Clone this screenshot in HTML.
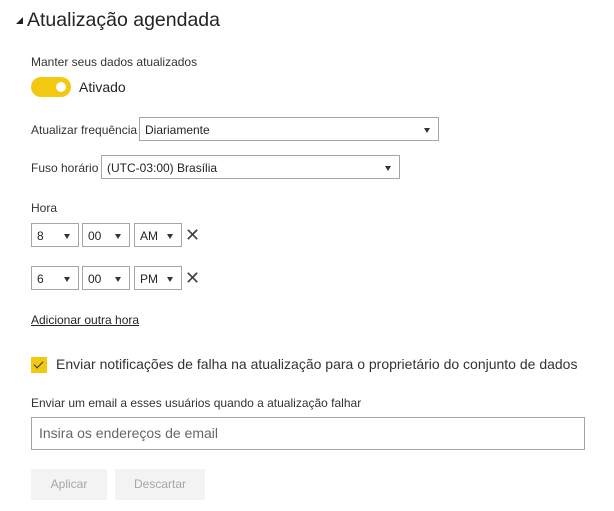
<!DOCTYPE html>
<html><head><meta charset="utf-8"><style>
*{margin:0;padding:0;box-sizing:border-box}
body{width:614px;height:511px;background:#fff;font-family:"Liberation Sans",sans-serif;color:#252423;position:relative;overflow:hidden}
.a{position:absolute;white-space:nowrap}
.sel{position:absolute;border:1px solid #a6a6a6;background:#fff;font-size:12px;padding-left:5px;line-height:22px;padding-top:1px;color:#252423}
.sel:after{content:"";position:absolute;right:8px;top:10px;border-left:3px solid transparent;border-right:3px solid transparent;border-top:5px solid #333}
.x{position:absolute;font-size:18px;line-height:18px;color:#444}
.btn{position:absolute;background:#f3f3f3;color:#a6a6a6;font-size:12px;text-align:center;line-height:31px}
</style></head><body>
<div class="a" style="left:16px;top:17px;width:0;height:0;border-left:7px solid transparent;border-bottom:7px solid #222"></div>
<div class="a" style="left:27px;top:9px;font-size:19.5px;color:#252423">Atualização agendada</div>
<div class="a" style="left:31px;top:55px;font-size:12px;color:#333">Manter seus dados atualizados</div>
<div class="a" style="left:31px;top:77px;width:40px;height:20px;border-radius:10px;background:#f2c811"></div>
<div class="a" style="left:56px;top:82px;width:10px;height:10px;border-radius:50%;background:#fff"></div>
<div class="a" style="left:79px;top:79px;font-size:14px">Ativado</div>
<div class="a" style="left:31px;top:123px;font-size:12px;color:#333">Atualizar frequência</div>
<div class="sel" style="left:139px;top:117px;width:300px;height:24px">Diariamente</div>
<div class="a" style="left:31px;top:161px;font-size:12px;color:#333">Fuso horário</div>
<div class="sel" style="left:101px;top:155px;width:299px;height:24px">(UTC-03:00) Brasília</div>
<div class="a" style="left:31px;top:201px;font-size:12px;color:#333">Hora</div>
<div class="sel" style="left:31px;top:223px;width:48px;height:24px">8</div>
<div class="sel" style="left:82px;top:223px;width:48px;height:24px">00</div>
<div class="sel" style="left:134px;top:223px;width:48px;height:24px">AM</div>
<div class="x" style="left:185px;top:226px">✕</div>
<div class="sel" style="left:31px;top:266px;width:48px;height:24px">6</div>
<div class="sel" style="left:82px;top:266px;width:48px;height:24px">00</div>
<div class="sel" style="left:134px;top:266px;width:48px;height:24px">PM</div>
<div class="x" style="left:185px;top:269px">✕</div>
<div class="a" style="left:31px;top:313px;font-size:12px;text-decoration:underline;color:#252423">Adicionar outra hora</div>
<div class="a" style="left:31px;top:357px;width:16px;height:16px;background:#f2c811"></div>
<div class="a" style="left:36px;top:359px;width:5px;height:9px;border-right:1.5px solid #333;border-bottom:1.5px solid #333;transform:rotate(45deg)"></div>
<div class="a" style="left:56px;top:356px;font-size:14px;color:#333">Enviar notificações de falha na atualização para o proprietário do conjunto de dados</div>
<div class="a" style="left:31px;top:396px;font-size:12px;color:#333">Enviar um email a esses usuários quando a atualização falhar</div>
<div class="a" style="left:31px;top:417px;width:554px;height:33px;border:1px solid #a6a6a6;font-size:14px;color:#666;padding-left:7px;line-height:31px">Insira os endereços de email</div>
<div class="btn" style="left:31px;top:469px;width:76px;height:31px">Aplicar</div>
<div class="btn" style="left:115px;top:469px;width:90px;height:31px">Descartar</div>
</body></html>
